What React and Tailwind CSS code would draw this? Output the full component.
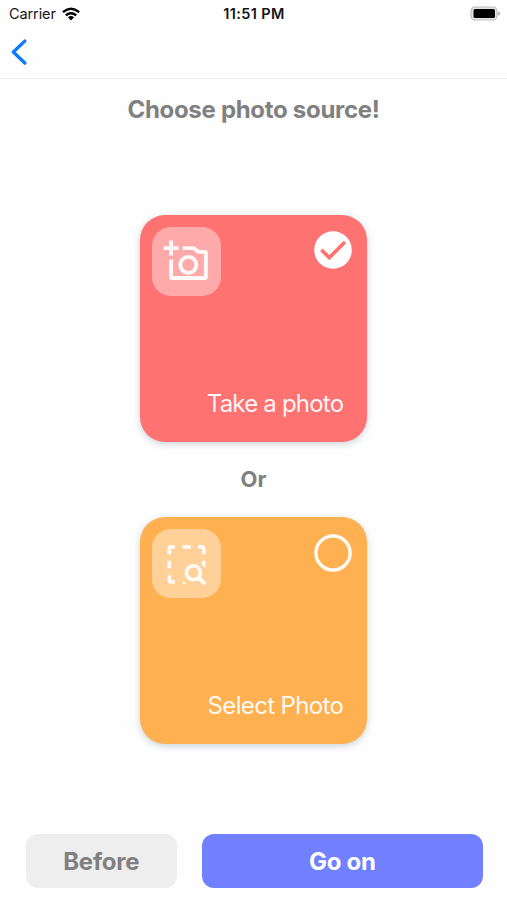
import React from "react";

const CameraPlusIcon = () => (
  <svg viewBox="0 0 68 68" className="w-full h-full" fill="none" stroke="#fffaf8" strokeWidth="3.8">
    <path d="M18.8 13.3v14.9M11.4 20.8h14.9" />
    <path d="M18.8 32v17.3q0 1 1 1h32.3q1 0 1-1V25.5q0-1-1-1H45.7L41 20.8H30.3" strokeLinejoin="round" />
    <circle cx="35.8" cy="37.3" r="7.9" />
  </svg>
);

const SelectSearchIcon = () => (
  <svg viewBox="0 0 68 68" className="w-full h-full" fill="none" stroke="#fffaf4" strokeWidth="3.7">
    <path d="M17.1 24.8v-5.7q0-1.6 1.6-1.6h3.7M29.9 17.5h8.3M45.3 17.5h4.1q1.6 0 1.6 1.6v5.7" />
    <path d="M17.1 31.4v7.3M17.1 45.5v5q0 1.6 1.6 1.6h3.7" />
    <path d="M48.6 31.2h4.2v7.7l-4.2-4.4z" fill="#fffaf4" stroke="none" />
    <path d="M30.5 50.5l3.4 3.4h-3.4z" fill="#fffaf4" stroke="none" />
    <circle cx="40.8" cy="43.1" r="6.9" />
    <path d="M45.7 48l6.7 6.3" strokeWidth="4" />
  </svg>
);

const CheckedCircle = () => (
  <svg viewBox="0 0 38 38" className="w-[38px] h-[38px]" fill="none">
    <circle cx="19" cy="19" r="18.8" fill="#fff" />
    <path d="M7.3 18.8l8 7.9L31 11" stroke="#fe7272" strokeWidth="3.7" />
  </svg>
);

const EmptyCircle = () => (
  <svg viewBox="0 0 38 38" className="w-[38px] h-[38px]" fill="none">
    <circle cx="19" cy="19" r="17.1" stroke="#fffaf4" strokeWidth="3.5" />
  </svg>
);

const SourceCard = ({ color, icon, mark, label, labelClass }) => (
  <button
    className={`${color} flex w-[227.5px] h-[227px] flex-col justify-between rounded-[25px] pt-3 pl-3 shadow-[0_2px_7px_rgba(40,70,90,0.24)]`}
  >
    <div className="flex justify-between pr-[15.5px]">
      <div className="w-[69px] h-[69px] rounded-[19px] bg-white/40">{icon}</div>
      <div className="pt-[4.5px]">{mark}</div>
    </div>
    <div className={`${labelClass} self-end pr-6 pb-[22px] leading-8 text-white/95 whitespace-nowrap`}>
      {label}
    </div>
  </button>
);

const StatusBar = () => (
  <div className="grid h-7 grid-cols-3 items-center text-[#161616]">
    <div className="flex items-center gap-[6px] pl-[9px]">
      <span className="text-[14.5px] leading-5 tracking-[-0.1px]">Carrier</span>
      <svg viewBox="0 0 18 14" className="w-[18px] h-[14px]" fill="none" stroke="#000" strokeWidth="2.5">
        <path d="M0.9 5.1q8.1-6.6 16.2 0M3.8 8.4q5.2-4.2 10.4 0" />
        <path d="M5.9 10.3q3.1-2.4 6.2 0L9 13.5z" fill="#000" stroke="none" />
      </svg>
    </div>
    <div className="pl-px text-center text-[14.5px] leading-5 font-semibold tracking-[0.4px] whitespace-nowrap">11:51 PM</div>
    <div className="flex items-center justify-end pr-[6px]">
      <svg viewBox="0 0 31 16" className="w-[31px] h-4" fill="none">
        <rect x="1" y="1" width="26" height="13" rx="4" fill="#e4e4e4" stroke="#bdbdbd" strokeWidth="1.2" />
        <rect x="3.5" y="3" width="21.5" height="9" rx="1.5" fill="#000" />
        <path d="M28.2 5.3q2 .8 2 2.2t-2 2.2z" fill="#aaa" />
      </svg>
    </div>
  </div>
);

export default function App() {
  return (
    <div className="flex h-[900px] w-[507px] flex-col overflow-hidden bg-[#fefefe] font-['Inter','Liberation_Sans',sans-serif]">
      {/* Header */}
      <header className="h-[79px] shrink-0 border-b border-[#f0f0f0]">
        <StatusBar />
        <button className="block pt-[11px] pl-[10px]" aria-label="Back">
          <svg viewBox="0 0 18 26" className="w-[18px] h-[26px]" fill="none">
            <path d="M14.8 2.1L3.3 13l11.5 11" stroke="#0c7aff" strokeWidth="3.3" strokeLinecap="round" strokeLinejoin="round" />
          </svg>
        </button>
      </header>

      {/* Photo source options */}
      <main className="flex flex-1 flex-col items-center text-[#808080]">
        <h1 className="mt-[15px] text-2xl leading-8 font-bold tracking-[-0.3px] whitespace-nowrap">Choose photo source!</h1>
        <div className="mt-[88.5px] flex flex-col items-center text-2xl">
          <SourceCard
            color="bg-[#fe7272]"
            icon={<CameraPlusIcon />}
            mark={<CheckedCircle />}
            label="Take a photo"
            labelClass="tracking-[-0.8px]"
          />
          <p className="flex h-[75.5px] items-center pt-px text-[22px] font-bold">Or</p>
          <SourceCard
            color="bg-[#ffb152]"
            icon={<SelectSearchIcon />}
            mark={<EmptyCircle />}
            label="Select Photo"
            labelClass="tracking-[-0.65px]"
          />
        </div>
      </main>

      {/* Footer buttons */}
      <footer className="mb-3 flex h-[54px] shrink-0 gap-[25px] pr-[24.5px] pl-[25.5px] text-2xl font-bold">
        <button className="w-[151.5px] rounded-xl bg-[#eee] pt-px text-[#808080] tracking-[-0.2px]">Before</button>
        <button className="flex-1 rounded-xl bg-[#7180ff] pt-px text-white tracking-[-0.3px]">Go on</button>
      </footer>
    </div>
  );
}
